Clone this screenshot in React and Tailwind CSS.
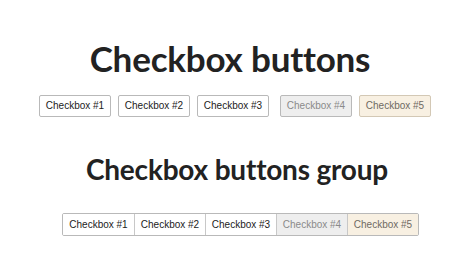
import React from 'react';

const font = 'font-["Liberation_Sans",Arial,sans-serif]';

const tones = {
  normal: 'bg-white text-[#222]',
  disabled: 'bg-[#eeeeee] text-[#8a8a8a]',
  checked: 'bg-[#f8f0e2] text-[#6f6a62]',
};

const items = [
  { label: 'Checkbox #1', tone: 'normal' },
  { label: 'Checkbox #2', tone: 'normal' },
  { label: 'Checkbox #3', tone: 'normal' },
  { label: 'Checkbox #4', tone: 'disabled' },
  { label: 'Checkbox #5', tone: 'checked' },
];

function App() {
  return (
    <div className="w-[474px] h-[278px] bg-white flex flex-col items-center pt-[38px] overflow-hidden">
      <h1 className='mr-[14px] text-[35px] leading-[40px] font-bold text-[#222] tracking-[-0.2px] font-["Lato",sans-serif]'>
        Checkbox buttons
      </h1>
      <div className="mt-[17px] mr-[4px] flex gap-[7px]">
        {items.map((it, i) => (
          <button
            key={it.label}
            className={`h-[22px] w-[72px] rounded-[2px] border text-[10px] leading-none ${font} ${tones[it.tone]} ${
              it.tone === 'checked' ? 'border-[#d3c8b5]' : 'border-[#b9b9b9]'
            } ${i === 3 ? 'ml-[4px]' : ''}`}
          >
            {it.label}
          </button>
        ))}
      </div>

      <h2 className='mt-[34px] text-[28px] leading-[36px] font-bold text-[#222] tracking-[-0.2px] font-["Lato",sans-serif]'>
        Checkbox buttons group
      </h2>
      <div className="mt-[26px] ml-[7px] flex rounded-[2px] border border-[#b9b9b9] overflow-hidden">
        {items.map((it, i) => (
          <span
            key={it.label}
            className={`h-[21px] w-[71px] flex items-center justify-center text-[10px] ${font} ${tones[it.tone]} ${
              i > 0 ? 'border-l border-[#c8c8c8]' : ''
            }`}
          >
            {it.label}
          </span>
        ))}
      </div>
    </div>
  );
}

export default App;
